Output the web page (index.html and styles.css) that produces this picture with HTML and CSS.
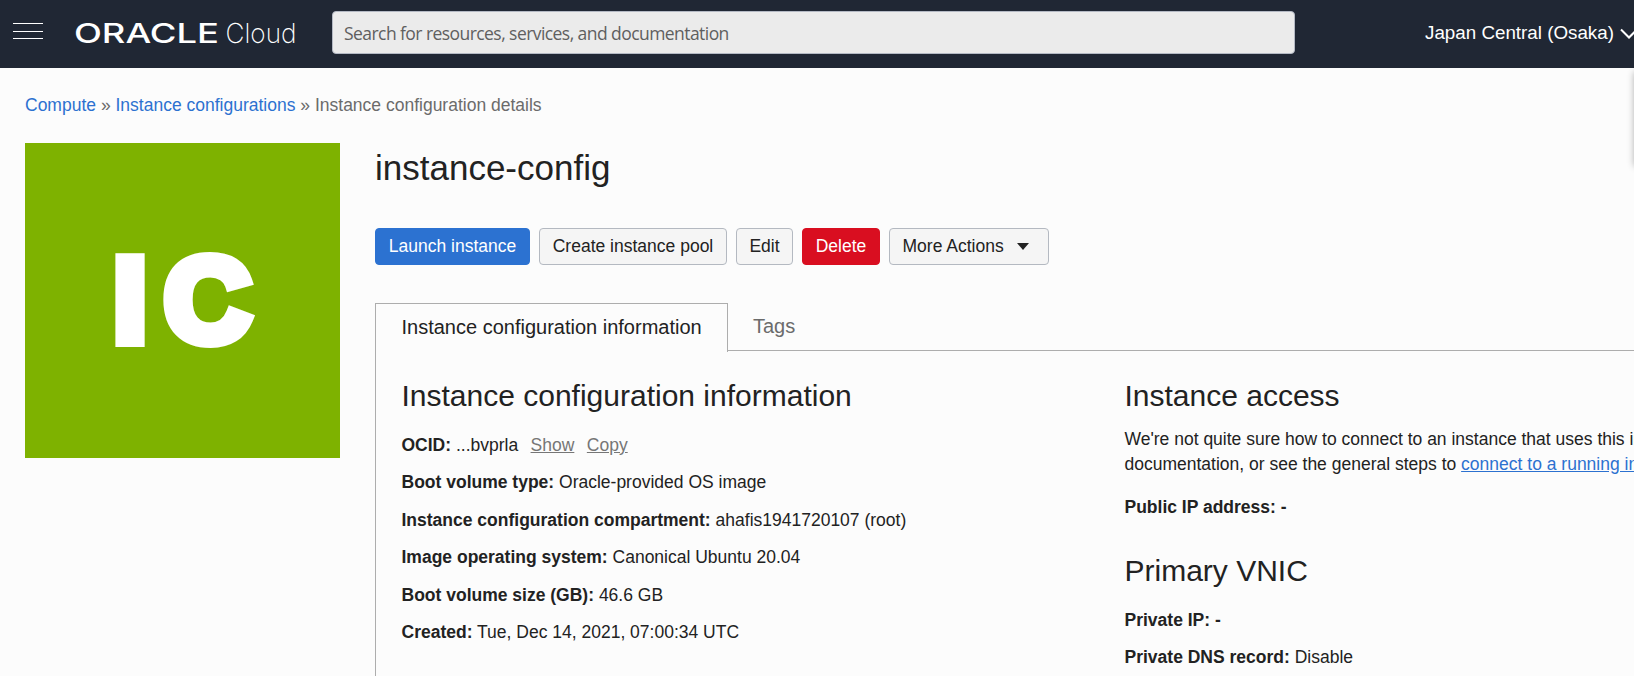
FILE: index.html
```html
<!DOCTYPE html>
<html lang="en">
<head>
<meta charset="utf-8">
<title>instance-config</title>
<link rel="stylesheet" href="styles.css">
</head>
<body>
<header class="topbar">
  <svg class="menu" width="30" height="17" viewBox="0 0 30 17"><path d="M0 .5h30M0 8.5h30M0 15.5h30" stroke="#fff"/></svg>
  <svg class="logo" width="225" height="32" viewBox="0 0 225 32" fill="#fff">
    <text class="logo-oracle" x="0" y="25" textLength="145" lengthAdjust="spacingAndGlyphs">ORACLE</text>
    <text class="logo-cloud" x="151.500" y="25" textLength="71" lengthAdjust="spacingAndGlyphs">Cloud</text>
  </svg>
  <div class="search">Search for resources, services, and documentation</div>
  <div class="region">Japan Central (Osaka)
    <svg class="chevron" width="18" height="12" viewBox="0 0 18 12"><path d="M1 1.500l8 8 8-8" fill="none" stroke="#fff" stroke-width="2"/></svg>
  </div>
</header>
<div class="edge-shadow"></div>
<nav class="crumbs"><a>Compute</a> » <a>Instance configurations</a> » Instance configuration details</nav>
<main class="content">
  <svg class="tile" width="315" height="315" viewBox="0 0 315 315">
    <rect width="315" height="315" fill="#7eb200"/>
    <text class="tile-text" y="198" x="88.500 139.500">IC</text>
  </svg>
  <section class="detail">
    <h1>instance-config</h1>
    <div class="actions">
      <button class="btn primary">Launch instance</button>
      <button class="btn create">Create instance pool</button>
      <button class="btn edit">Edit</button>
      <button class="btn danger">Delete</button>
      <button class="btn more">More Actions <svg width="12" height="7" viewBox="0 0 12 7"><path d="M0 0h12L6 7z" fill="#222"/></svg></button>
    </div>
    <div class="tabs">
      <div class="tab active">Instance configuration information</div>
      <div class="tab">Tags</div>
    </div>
    <div class="panel">
      <div class="col info">
        <h2>Instance configuration information</h2>
        <p><b>OCID:</b> ...bvprla <a class="sub">Show</a><a class="sub">Copy</a></p>
        <p><b>Boot volume type:</b> Oracle-provided OS image</p>
        <p><b>Instance configuration compartment:</b> ahafis1941720107 (root)</p>
        <p><b>Image operating system:</b> Canonical Ubuntu 20.04</p>
        <p><b>Boot volume size (GB):</b> 46.6 GB</p>
        <p><b>Created:</b> Tue, Dec 14, 2021, 07:00:34 UTC</p>
      </div>
      <div class="col access">
        <h2>Instance access</h2>
        <p class="note">We're not quite sure how to connect to an instance that uses this image. See the<br>documentation, or see the general steps to <a class="link">connect to a running instance</a>.</p>
        <p class="ip"><b>Public IP address:</b> <b>-</b></p>
        <h2 class="vnic">Primary VNIC</h2>
        <p class="private-ip"><b>Private IP:</b> <b>-</b></p>
        <p><b>Private DNS record:</b> Disable</p>
      </div>
    </div>
  </section>
</main>
</body>
</html>
```
FILE: styles.css
```css
* { box-sizing: border-box; }
body {
  margin: 0;
  width: 1634px;
  height: 676px;
  overflow: hidden;
  background: #fcfcfc;
  color: #222;
  font: 17.5px/25px "Liberation Sans", Arial, sans-serif;
}
h1, h2, p { margin: 0; font-weight: 400; }
.topbar {
  display: flex;
  height: 68px;
  background: #202734;
  padding: 11px 0 0 13px;
  overflow: hidden;
}
.menu { margin-top: 12px; flex: none; }
.logo { margin: 7px 0 0 31px; flex: none; overflow: visible; }
.logo-oracle { font: 500 26.5px "Inter", sans-serif; }
.logo-cloud { font: 200 27.5px "Inter", sans-serif; }
.search {
  flex: none;
  width: 963px;
  height: 43px;
  margin-left: 33px;
  padding-left: 11px;
  border: 1px solid #b4b9c4;
  border-radius: 4px;
  background: #ebebeb;
  color: #5f5f5f;
  font: 17.5px/43px "Open Sans", "Noto Sans", sans-serif;
  letter-spacing: -0.56px;
}
.region {
  flex: none;
  margin-left: 130px;
  padding-top: 9px;
  color: #fff;
  font-size: 18.8px;
  line-height: 25px;
  white-space: nowrap;
}
.chevron { margin-left: 1px; vertical-align: -1px; }
.edge-shadow {
  position: absolute;
  left: 1634px;
  top: 68px;
  width: 20px;
  height: 94px;
  box-shadow: 0 4px 7px rgba(0, 0, 0, .3);
  clip-path: inset(0 0 -20px -20px);
}
.crumbs { padding: 25px 25px 0; color: #6b6b6b; }
.crumbs a, .link { color: #2c71d0; }
.link { text-decoration: underline; }
.content { display: flex; padding: 25px 0 0 25px; }
.tile { flex: none; }
.tile-text {
  font: bold 119px "Liberation Sans", Arial, sans-serif;
  fill: #fff;
  stroke: #fff;
  stroke-width: 12px;
}
.detail { flex: none; width: 1259px; margin-left: 35px; }
h1 { font-size: 35px; line-height: 50px; }
.actions { display: flex; gap: 9px; margin-top: 35px; }
.btn {
  height: 37px;
  padding: 0;
  border: 1px solid #b4b9c1;
  border-radius: 4px;
  background: #f5f5f5;
  color: #222;
  font: 17.5px/33px "Liberation Sans", Arial, sans-serif;
  white-space: nowrap;
}
.primary { width: 155px; background: #2c72d1; border-color: #2c72d1; color: #fff; }
.create { width: 188px; }
.edit { width: 57px; }
.danger { width: 78px; background: #d90e20; border-color: #d90e20; color: #fff; }
.more { width: 160px; padding-left: 12.5px; text-align: left; }
.more svg { margin-left: 8px; vertical-align: 2px; }
.tabs {
  display: flex;
  height: 48px;
  margin-top: 38px;
  background: linear-gradient(#adadad, #adadad) 0 47px / 100% 1px no-repeat;
  font-size: 20px;
}
.tab { padding: 11px 25px 0; color: #6b6b6b; }
.active {
  width: 353px;
  height: 49px;
  padding-right: 0;
  padding-left: 25.5px;
  border: 1px solid #adadad;
  border-bottom: 0;
  background: #fcfcfc;
  color: #222;
}
.panel { display: flex; border-left: 1px solid #adadad; padding: 25px 0 0 25.5px; height: 325px; }
.info { width: 723px; flex: none; }
.access { white-space: nowrap; }
h2 { font-size: 30px; line-height: 40px; margin-bottom: 16.5px; }
.col p { margin-bottom: 12.5px; }
.access h2 { margin-bottom: 11px; }
.col .note { margin-bottom: 18px; }
.col .ip { margin-bottom: 31px; }
.access .vnic { margin-bottom: 17px; }
.col .private-ip { margin-bottom: 12px; }
.sub { color: #767676; text-decoration: underline; margin: 0 5px 0 7.5px; }
```
